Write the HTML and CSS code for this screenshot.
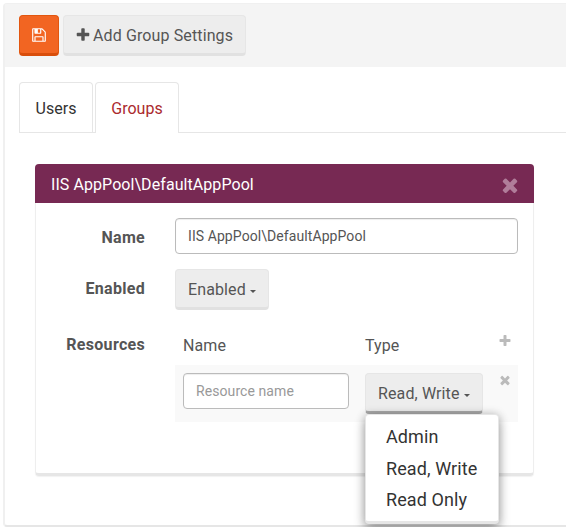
FILE: index.html
```html
<!DOCTYPE html>
<html lang="en">
<head>
<meta charset="utf-8">
<title>Group Settings</title>
<link rel="stylesheet" href="styles.css">
</head>
<body>
<svg class="defs" width="0" height="0">
<symbol id="times" viewBox="0 0 1792 1792"><path d="M1490 1322q0 40-28 68l-136 136q-28 28-68 28t-68-28l-294-294-294 294q-28 28-68 28t-68-28l-136-136q-28-28-28-68t28-68l294-294-294-294q-28-28-28-68t28-68l136-136q28-28 68-28t68 28l294 294 294-294q28-28 68-28t68 28l136 136q28 28 28 68t-28 68l-294 294 294 294q28 28 28 68z"/></symbol>
<symbol id="plus" viewBox="0 0 1792 1792"><path d="M1600 736v192q0 40-28 68t-68 28h-416v416q0 40-28 68t-68 28h-192q-40 0-68-28t-28-68v-416h-416q-40 0-68-28t-28-68v-192q0-40 28-68t68-28h416v-416q0-40 28-68t68-28h192q40 0 68 28t28 68v416h416q40 0 68 28t28 68z"/></symbol>
<symbol id="save" viewBox="0 0 1792 1792"><path d="M512 1536h768v-384h-768v384zm896 0h128v-896q0-14-10-38.500t-20-34.500l-281-281q-10-10-34-20t-39-10v416q0 40-28 68t-68 28h-576q-40 0-68-28t-28-68v-416h-128v1280h128v-416q0-40 28-68t68-28h832q40 0 68 28t28 68v416zm-384-928v-320q0-13-9.500-22.500t-22.500-9.500h-192q-13 0-22.500 9.500t-9.500 22.500v320q0 13 9.500 22.500t22.500 9.500h192q13 0 22.500-9.500t9.500-22.500zm640 32v928q0 40-28 68t-68 28h-1344q-40 0-68-28t-28-68v-1344q0-40 28-68t68-28h928q40 0 88 20t76 48l280 280q28 28 48 76t20 88z"/></symbol>
</svg>
<main class="page">
  <header class="toolbar">
    <button class="btn btn-save" aria-label="Save"><svg class="icon"><use href="#save"/></svg></button>
    <button class="btn btn-add"><svg class="icon"><use href="#plus"/></svg><span>Add Group Settings</span></button>
  </header>
  <nav class="tabs">
    <a class="tab">Users</a>
    <a class="tab active">Groups</a>
  </nav>
  <section class="panel">
    <div class="panel-head"><span>IIS AppPool\DefaultAppPool</span><svg class="close"><use href="#times"/></svg></div>
    <div class="form">
      <label class="label">Name</label>
      <input class="input" type="text" value="IIS AppPool\DefaultAppPool">
      <label class="label">Enabled</label>
      <div><button class="btn">Enabled<i class="caret"></i></button></div>
      <label class="label res-label">Resources</label>
      <div class="resources">
        <div class="row head"><span>Name</span><span>Type</span><svg class="small"><use href="#plus"/></svg></div>
        <div class="row item">
          <input class="input" type="text" placeholder="Resource name">
          <div class="dropdown">
            <button class="btn open">Read, Write<i class="caret"></i></button>
            <ul class="menu"><li>Admin</li><li>Read, Write</li><li>Read Only</li></ul>
          </div>
          <svg class="small"><use href="#times"/></svg>
        </div>
      </div>
    </div>
  </section>
</main>
</body>
</html>
```
FILE: styles.css
```css
* { box-sizing: border-box; }
html, body { height: 100%; }
body { margin: 0; overflow: hidden; background: #fff; color: #555; font: 16px/24px Roboto, sans-serif; }
svg { display: block; fill: currentColor; }
.defs { position: absolute; }
.page { margin: 3px 0 0 3px; height: 524px; border: 2px solid #f0f0f0; border-width: 1px 0 2px 2px; border-bottom-color: #e6e6e6; border-radius: 4px 0 0 4px; }
.toolbar { display: flex; gap: 4px; height: 63px; padding: 11px 0 0 14px; background: #f4f4f4; }
.btn { display: inline-flex; align-items: center; height: 41px; padding: 2px 12px 0; border: 1px solid #e6e6e6; border-bottom: 3px solid #e1e1e1; border-radius: 4px; background: #ededed; color: #555; font: inherit; letter-spacing: .12px; white-space: nowrap; }
.btn-save { width: 40px; padding: 0 11px; border-color: #e2560f; border-bottom-color: #d94e0b; background: #f26522; color: #fff; }
.btn-add { width: 183px; padding-left: 11px; }
.btn-add span { margin-left: 2px; }
.btn-add .icon { margin-top: -2px; }
.icon { flex: none; width: 16px; height: 16px; }
.caret { margin: 3px 0 0 4px; border: 3.5px solid transparent; border-top-color: #555; border-bottom: 0; }
.tabs { display: flex; gap: 2px; margin: 15px 0 0 14px; height: 51px; border-bottom: 1px solid #e6e6e6; }
.tab { height: 50px; width: 74px; padding: 14px 0 0; border: 1px solid #e6e6e6; border-bottom: 0; border-radius: 4px 4px 0 0; color: #333; text-align: center; }
.tab.active { height: 51px; width: 84px; background: #fff; color: #ab2a2e; }
.panel { margin: 31px 0 0 30px; width: 499px; height: 312px; border: 1px solid #eee; border-width: 0 1px 3px; border-bottom-color: #e6e6e6; border-radius: 4px; box-shadow: 0 1px 1px #f2f2f2; }
.panel-head { display: flex; align-items: center; justify-content: space-between; height: 39px; margin: 0 -1px; padding: 2px 13px 0 16px; border-radius: 4px 4px 0 0; background: #772953; color: #fff; letter-spacing: .07px; }
.close { width: 22px; height: 22px; margin-top: 1px; color: #b07d9a; }
.form { display: grid; grid-template-columns: 109px 343px; column-gap: 30px; grid-template-rows: 51px 57px auto; padding-top: 15px; }
.label { padding-top: 8px; text-align: right; font-weight: 700; letter-spacing: .3px; }
.input { display: block; width: 100%; height: 36px; padding: 0 12px; border: 1px solid #bbb; border-radius: 4px; background: #fff; box-shadow: inset 0 1px 1px #eee; color: #555; font: 14px Roboto, sans-serif; letter-spacing: .08px; outline: 0; }
.input::placeholder { color: #999; opacity: 1; }
.res-label { padding-top: 7px; }
.row { display: grid; grid-template-columns: 166px 118px 14px; column-gap: 16px; padding: 8px 8px 0; }
.head { height: 39px; letter-spacing: .1px; }
.item { height: 57px; background: #f9f9f9; }
.small { width: 14px; height: 14px; margin-left: -1px; color: #bbb; }
.dropdown { position: relative; }
.open { width: 118px; border-bottom-color: #aaa; }
.menu { position: absolute; top: 41px; left: 0; width: 134px; height: 110px; margin: 0; padding: 6px 0 0; border: 1px solid #e6e6e6; border-bottom: 3px solid #e6e6e6; border-radius: 4px; background: #fff; box-shadow: 0 6px 12px rgba(0,0,0,.3), 0 0 10px rgba(0,0,0,.2); list-style: none; color: #333; font-size: 18px; line-height: 31.5px; letter-spacing: .1px; }
.menu li { padding-left: 20px; white-space: nowrap; }
```
